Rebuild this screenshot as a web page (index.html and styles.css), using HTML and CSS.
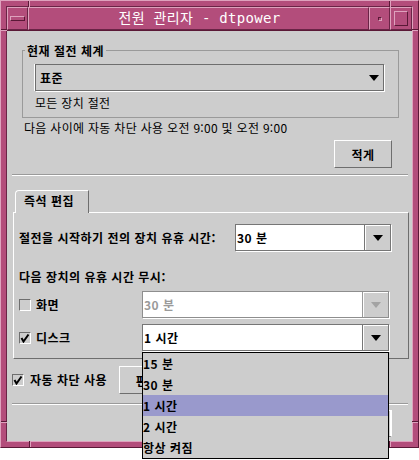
FILE: index.html
```html
<!DOCTYPE html>
<html lang="ko">
<head>
<meta charset="utf-8">
<title>전원 관리자 - dtpower</title>
<link rel="stylesheet" href="styles.css">
</head>
<body>
<div class="window">
  <span class="notch nv n-top-l"></span>
  <span class="notch nv n-top-r"></span>
  <span class="notch nv n-bot-l"></span>
  <span class="notch nv n-bot-r"></span>
  <span class="notch nh n-left-t"></span>
  <span class="notch nh n-left-b"></span>
  <span class="notch nh n-right-t"></span>
  <span class="notch nh n-right-b"></span>
  <div class="frame-inner">
    <div class="titlebar">
      <div class="tb-btn tb-menu"><span class="menu-bar"></span></div>
      <div class="tb-title">전원 관리자 - dtpower</div>
      <div class="tb-btn tb-min"><span class="min-dot"></span></div>
      <div class="tb-btn tb-max"><span class="max-box"></span></div>
    </div>
    <div class="client">
      <div class="group">
        <div class="legend">현재 절전 체계</div>
        <div class="option-menu"><span class="opt-value">표준</span><span class="arrow"></span></div>
        <div class="desc">모든 장치 절전</div>
      </div>
      <div class="auto-text">다음 사이에 자동 차단 사용 오전 9:00 및 오전 9:00</div>
      <div class="btn-row"><button class="btn btn-less">적게</button></div>
      <div class="sep"></div>
      <div class="tabs"><div class="tab">즉석 편집</div></div>
      <div class="panel">
        <div class="prow">
          <span class="blabel">절전을 시작하기 전의 장치 유휴 시간:</span>
          <div class="combo combo-idle">
            <div class="combo-field">30 분</div>
            <div class="combo-btn"><span class="arrow"></span></div>
          </div>
        </div>
        <div class="blabel sub-head">다음 장치의 유휴 시간 무시:</div>
        <div class="prow prow-dev">
          <div class="check"><span class="box"></span><span class="blabel">화면</span></div>
          <div class="combo combo-dev disabled">
            <div class="combo-field">30 분</div>
            <div class="combo-btn"><span class="arrow"></span></div>
          </div>
        </div>
        <div class="prow prow-dev">
          <div class="check"><span class="box"><svg class="tick" width="10" height="10" viewBox="0 0 10 10"><path d="M1.5 5 L3.5 8.5 L8.5 1.5" fill="none" stroke="#000" stroke-width="2"/></svg></span><span class="blabel">디스크</span></div>
          <div class="combo combo-dev open">
            <div class="combo-field">1 시간</div>
            <div class="combo-btn"><span class="arrow"></span></div>
            <ul class="popup">
              <li>15 분</li>
              <li>30 분</li>
              <li class="sel">1 시간</li>
              <li>2 시간</li>
              <li>항상 켜짐</li>
            </ul>
          </div>
        </div>
      </div>
      <div class="auto-row">
        <div class="check check-auto"><span class="box"><svg class="tick" width="10" height="10" viewBox="0 0 10 10"><path d="M1.5 5 L3.5 8.5 L8.5 1.5" fill="none" stroke="#000" stroke-width="2"/></svg></span><span class="blabel">자동 차단 사용</span></div>
        <button class="btn btn-edit">편집...</button>
      </div>
      <div class="sep sep2"></div>
      <div class="bottom-row"><button class="btn btn-close">닫기</button></div>
    </div>
  </div>
</div>
</body>
</html>
```

FILE: styles.css
```css
* { box-sizing: border-box; margin: 0; padding: 0; }
html, body { background: #ffffff; }
body {
  font-family: "Noto Sans CJK KR", "Liberation Sans", sans-serif;
  font-size: 12px;
  line-height: 16px;
  color: #000;
  min-height: 460px;
}

/* window frame */
.window {
  position: relative;
  width: 419px;
  height: 448px;
  background: #b34d7b;
  border: 1px solid;
  border-color: #dea2bd #5a1836 #5a1836 #dea2bd;
  padding: 5px;
}
.frame-inner {
  height: 100%;
  border: 1px solid;
  border-color: #6a2446 #dea2bd #dea2bd #6a2446;
  display: flex;
  flex-direction: column;
}
.notch { position: absolute; }
.nv { width: 2px; height: 6px; border-left: 1px solid #5a1836; border-right: 1px solid #dea2bd; }
.nh { width: 6px; height: 2px; border-top: 1px solid #5a1836; border-bottom: 1px solid #dea2bd; }
.n-top-l { left: 27px; top: 0; }
.n-top-r { left: 388px; top: 0; }
.n-bot-l { left: 28px; bottom: 0; }
.n-bot-r { left: 388px; bottom: 0; }
.n-left-t { left: 0; top: 28px; }
.n-left-b { left: 0; top: 420px; }
.n-right-t { right: 0; top: 28px; }
.n-right-b { right: 0; top: 420px; }

.titlebar {
  height: 24px;
  flex: none;
  display: flex;
  border-bottom: 1px solid #5a1836;
}
.tb-btn, .tb-title {
  border: 1px solid;
  border-color: #dea2bd #6a2446 #6a2446 #dea2bd;
  background: #b34d7b;
}
.tb-btn { display: flex; align-items: center; justify-content: center; flex: none; }
.tb-menu { width: 21px; }
.tb-min { width: 21px; }
.tb-max { width: 22px; }
.tb-title {
  flex: 1;
  color: #ffffff;
  font-family: "DejaVu Sans Mono", "Noto Sans CJK KR", monospace;
  font-size: 14px;
  letter-spacing: 0.3px;
  line-height: 21px;
  text-align: center;
  padding-left: 2px;
}
.menu-bar {
  width: 15px; height: 5px;
  border: 1px solid;
  border-color: #dea2bd #5a1836 #5a1836 #dea2bd;
}
.min-dot {
  width: 4px; height: 4px;
  border: 1px solid;
  border-color: #5a1836 #dea2bd #dea2bd #5a1836;
  margin-left: 1px;
}
.max-box {
  width: 14px; height: 15px;
  border: 1px solid;
  border-color: #dea2bd #5a1836 #5a1836 #dea2bd;
}

/* client */
.client {
  flex: 1;
  min-height: 0;
  background: #cdcdcd;
  display: flex;
  flex-direction: column;
}
.desc, .auto-text { letter-spacing: 0.3px; }
.blabel, .legend, .tab, .btn, .opt-value, .combo-field, .popup li {
  font-weight: 700;
  letter-spacing: 0.5px;
}

.group {
  margin: 19px 13px 0 15px;
  border: 1px solid #9a9a9a;
  padding: 0 0 6px 12px;
}
.legend {
  margin: -8px 0 0 -10px;
  padding: 0 2px;
  height: 16px;
  width: max-content;
  background: #cdcdcd;
}
.option-menu {
  margin-top: 5px;
  width: 349px;
  height: 27px;
  display: flex;
  align-items: center;
  justify-content: space-between;
  border: 1px solid #6e6e6e;
  box-shadow: -1px 0 0 #fff, 1px 1px 0 #fff;
  padding: 0 4px 0 4px;
}
.arrow {
  width: 0; height: 0;
  border-left: 5.5px solid transparent;
  border-right: 5.5px solid transparent;
  border-top: 6px solid #000;
}
.desc { margin: 4px 0 0 0; }

.auto-text { margin: 2px 0 0 17px; }

.btn-row { display: flex; justify-content: flex-end; margin: 4px 20px 0 0; }
.btn {
  font-family: inherit;
  font-size: 12px;
  color: #000;
  background: #cdcdcd;
  border: 1px solid;
  border-color: #ffffff #6e6e6e #6e6e6e #ffffff;
}
.btn-less { width: 58px; height: 28px; }

.sep {
  margin: 6px 4px 0 5px;
  height: 2px;
  border-top: 1px solid #9a9a9a;
  border-bottom: 1px solid #ffffff;
}

.tabs {
  margin: 14px 0 -1px 8px;
  display: flex;
  position: relative;
  z-index: 1;
}
.tab {
  width: 74px;
  height: 23px;
  background: #cdcdcd;
  border: 1px solid;
  border-bottom: none;
  border-color: #ffffff #6e6e6e transparent #ffffff;
  border-top-left-radius: 4px;
  padding-left: 8px;
  line-height: 20px;
}

.panel {
  margin: 0 3px 0 6px;
  border: 1px solid;
  border-color: #ffffff #6e6e6e #6e6e6e #ffffff;
  padding: 11px 17px 7px 5px;
}
.prow { display: flex; align-items: center; height: 27px; }
.prow-dev { margin-top: 6px; }
.sub-head { margin-top: 18px; height: 16px; }

.combo {
  height: 27px;
  display: flex;
  border: 1px solid #767676;
  box-shadow: 1px 1px 0 #fff;
}
.combo-idle { width: 156px; margin-left: auto; }
.combo-dev { width: 247px; }
.combo-field {
  flex: 1;
  background: #ffffff;
  padding-left: 1px;
  line-height: 25px;
}
.combo-btn {
  width: 26px;
  border-left: 1px solid #767676;
  background: #cdcdcd;
  box-shadow: inset 1px 1px 0 #fff;
  display: flex;
  align-items: center;
  justify-content: center;
}
.disabled { border-color: #8e8e8e; }
.disabled .combo-field { color: #9a9a9a; }
.disabled .combo-btn { border-left-color: #9a9a9a; }
.disabled .arrow { border-top-color: #a3a3a3; }

.check { display: flex; align-items: center; width: 123px; }
.box {
  width: 12px; height: 12px;
  border: 1px solid;
  border-color: #6e6e6e #ffffff #ffffff #6e6e6e;
  background: #cdcdcd;
  margin-right: 5px;
  display: flex;
  align-items: center;
  justify-content: center;
  flex: none;
}

.open { position: relative; }
.popup {
  position: absolute;
  left: -1px;
  top: calc(100% + 2px);
  width: 247px;
  list-style: none;
  background: #cdcdcd;
  border: 1px solid #000;
  z-index: 10;
}
.popup li { height: 21px; line-height: 21px; padding-left: 0; }
.popup li.sel { background: #9999cc; }

.auto-row { display: flex; align-items: center; margin: 7px 0 0 5px; height: 28px; }
.check-auto { width: 107px; }
.check-auto .box { margin-right: 6px; }
.btn-edit { width: 70px; height: 28px; }

.sep2 { margin-top: 9px; }

.bottom-row { display: flex; justify-content: flex-end; margin: 5px 20px 0 0; }
.btn-close { width: 90px; height: 27px; border-right: 2px solid #ffffff; }
```
